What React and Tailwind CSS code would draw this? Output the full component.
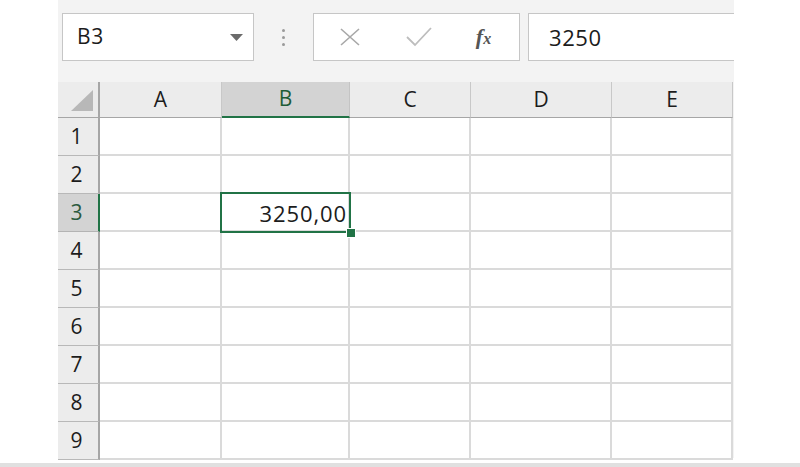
import React from "react";

const cols = ["A", "B", "C", "D", "E"];
const rows = [1, 2, 3, 4, 5, 6, 7, 8, 9];

export default function App() {
  return (
    <div
      className="w-[800px] h-[467px] bg-white flex flex-col overflow-hidden text-[#1c1c1c]"
      style={{ fontFamily: '"Open Sans", "Noto Sans", sans-serif' }}
    >
      <div className="ml-[58px] w-[676px] h-[458px] bg-[#f3f3f3] flex flex-col shrink-0">
        {/* Formula bar */}
        <div className="h-[82px] flex items-start pt-[13px] pl-[4px] shrink-0">
          <div className="w-[192px] h-[48px] bg-white border border-[#c6c6c6] flex items-center pl-[14px] pr-[10px]">
            <span className="text-[21px] tracking-[0.6px] flex-1">B3</span>
            <svg width="13" height="7" viewBox="0 0 13 7">
              <polygon points="0,0 13,0 6.5,7" fill="#6b6b6b" />
            </svg>
          </div>
          <div className="w-[59px] h-[48px] flex flex-col items-center justify-center gap-[4px]">
            <span className="w-[3px] h-[3px] rounded-full bg-[#9a9a9a]" />
            <span className="w-[3px] h-[3px] rounded-full bg-[#9a9a9a]" />
            <span className="w-[3px] h-[3px] rounded-full bg-[#9a9a9a]" />
          </div>
          <div className="w-[207px] h-[48px] bg-white border border-[#c6c6c6] flex items-center">
            <div className="w-[70px] flex justify-center pl-[2px]">
              <svg width="22" height="18" viewBox="0 0 22 18">
                <path d="M2 1 L20 17 M20 1 L2 17" stroke="#a8a8a8" strokeWidth="1.6" fill="none" />
              </svg>
            </div>
            <div className="w-[70px] flex justify-center">
              <svg width="26" height="20" viewBox="0 0 26 20">
                <path d="M1 10 L9 18 L25 1" stroke="#bdbdbd" strokeWidth="1.8" fill="none" />
              </svg>
            </div>
            <div className="flex-1 flex justify-center pr-[6px]">
              <span
                className="italic font-bold text-[#555] text-[22px] leading-none"
                style={{ fontFamily: '"Liberation Serif", "DejaVu Serif", serif' }}
              >
                f<span className="text-[16px]">x</span>
              </span>
            </div>
          </div>
          <div className="ml-[8px] flex-1 h-[48px] bg-white border border-[#c6c6c6] border-r-0 flex items-center pl-[20px]">
            <span className="text-[22px] tracking-[0.6px]">3250</span>
          </div>
        </div>

        {/* Grid */}
        <div className="grid grid-cols-[42px_122px_128px_121px_141px_121px] grid-rows-[36px_repeat(9,38px)]">
          {/* header row */}
          <div className="bg-[#ececec] border-r-2 border-r-[#a6a6a6] border-b border-b-[#a6a6a6] flex items-end justify-end pr-[5px] pb-[6px]">
            <svg width="22" height="21" viewBox="0 0 22 21">
              <polygon points="22,0 22,21 0,21" fill="#b8b8b8" />
            </svg>
          </div>
          {cols.map((c) =>
            c === "B" ? (
              <div
                key={c}
                className="bg-[#d3d3d3] border-r border-r-[#c4c4c4] border-b-2 border-b-[#217346] flex items-center justify-center text-[21px] text-[#1e5c38]"
              >
                {c}
              </div>
            ) : (
              <div
                key={c}
                className="bg-[#ececec] border-r border-r-[#c8c8c8] border-b border-b-[#a6a6a6] flex items-center justify-center text-[21px]"
              >
                {c}
              </div>
            )
          )}

          {rows.map((r) => (
            <React.Fragment key={r}>
              {r === 3 ? (
                <div className="bg-[#d3d3d3] border-r-2 border-r-[#217346] border-b border-b-[#b4b4b4] flex items-center justify-center pr-[3px] text-[21px] text-[#2b5a3e]">
                  {r}
                </div>
              ) : (
                <div className="bg-[#ececec] border-r-2 border-r-[#a6a6a6] border-b border-b-[#b8b8b8] flex items-center justify-center pr-[3px] text-[21px]">
                  {r}
                </div>
              )}
              {cols.map((c) => (
                <div
                  key={c}
                  className="relative bg-white border-r-2 border-r-[#dadada] border-b-2 border-b-[#dadada]"
                >
                  {r === 3 && c === "B" && (
                    <div className="absolute left-[-2px] top-[-2px] w-[131px] h-[41px] border-2 border-[#217346] flex items-center justify-end pr-[2px] z-10">
                      <span className="text-[22px] tracking-[0.9px] leading-none">3250,00</span>
                      <span className="absolute right-[-6px] bottom-[-6px] w-[8px] h-[8px] bg-[#217346] outline outline-1 outline-white" />
                    </div>
                  )}
                </div>
              ))}
            </React.Fragment>
          ))}
        </div>
      </div>
      <div className="h-[5px] shrink-0" />
      <div className="h-[4px] bg-[#e0e0e0] shrink-0" />
    </div>
  );
}
